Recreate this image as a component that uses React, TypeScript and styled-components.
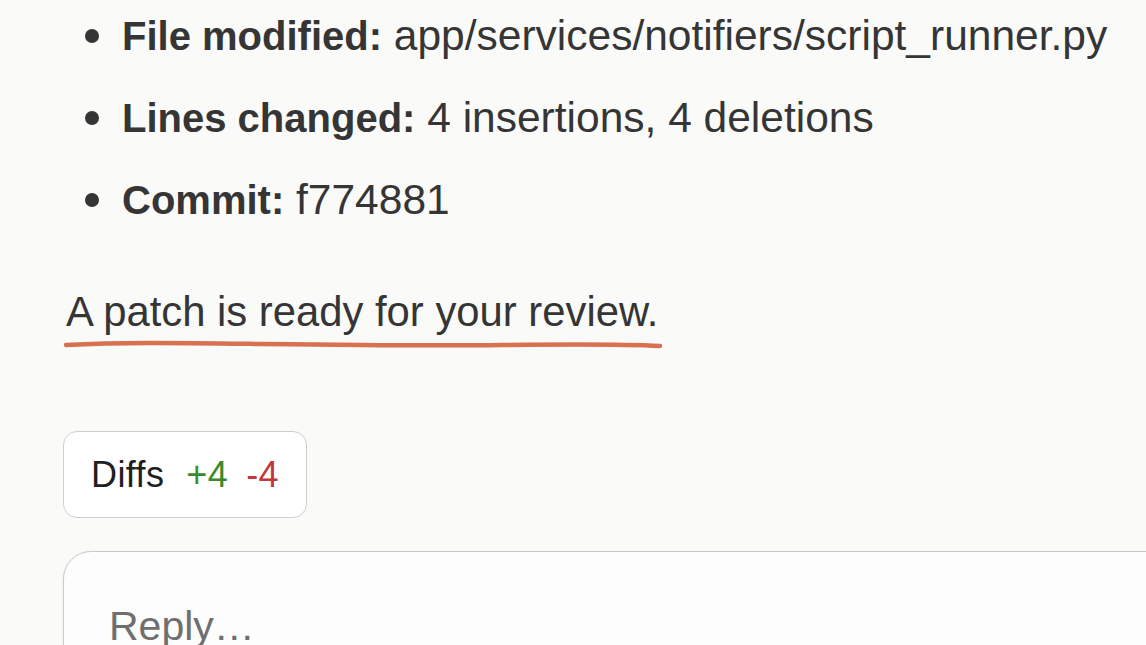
import styled, { createGlobalStyle } from "styled-components";

const GlobalStyle = createGlobalStyle`
  html, body {
    margin: 0;
    padding: 0;
    background: #fafaf9;
  }
  body {
    font-family: "Liberation Sans", Arial, sans-serif;
    color: #353535;
  }
`

const Page = styled.div`
  width: 1146px;
  height: 645px;
  overflow: hidden;
  padding: 12px 0 0 63px;
  box-sizing: border-box;
`

const List = styled.ul`
  list-style: none;
  margin: 0;
  padding: 0;
  display: flex;
  flex-direction: column;
  gap: 34px;
`

const Item = styled.li`
  position: relative;
  padding-left: 59px;
  font-size: 42.5px;
  line-height: 48px;
  white-space: nowrap;
  &::before {
    content: "";
    position: absolute;
    left: 22px;
    top: 17px;
    width: 14px;
    height: 14px;
    border-radius: 50%;
    background: #353535;
  }
`

const Label = styled.strong`
  font-weight: 700;
  font-size: 40px;
`

const Note = styled.p`
  margin: 64px 0 0 3px;
  font-size: 41.8px;
  line-height: 48px;
  color: #353535;
`

const Underline = styled.svg`
  display: block;
  margin-top: 4px;
`

const DiffButton = styled.button`
  display: flex;
  align-items: center;
  gap: 20px;
  margin-top: 81px;
  width: 244px;
  height: 87px;
  padding: 0 0 0 27px;
  box-sizing: border-box;
  background: #ffffff;
  border: 1.5px solid #cfcfcf;
  border-radius: 14px;
  font-family: "Liberation Sans", Arial, sans-serif;
  font-size: 36px;
  letter-spacing: 0.4px;
  color: #1f1f1f;
`

const Count = styled.span<{ tone: "add" | "del" }>`
  color: ${(p) => (p.tone === "add" ? "#3a8a2a" : "#c2393c")};
  margin-left: ${(p) => (p.tone === "add" ? "2px" : "-2px")};
`

const ReplyBox = styled.div`
  margin-top: 33px;
  width: 1200px;
  height: 140px;
  box-sizing: border-box;
  background: #fdfdfd;
  border: 1.5px solid #c9c9c9;
  border-radius: 28px;
  box-shadow: 0 1px 3px rgba(0, 0, 0, 0.06);
  padding: 50px 0 0 45px;
`

const ReplyInput = styled.div`
  font-size: 41px;
  line-height: 48px;
  color: #6f6f6f;
`

const items = [
  { label: "File modified:", value: "app/services/notifiers/script_runner.py" },
  { label: "Lines changed:", value: "4 insertions, 4 deletions" },
  { label: "Commit:", value: "f774881" },
]

export default function App() {
  return (
    <>
      <GlobalStyle />
      <Page>
        <List>
          {items.map((item) => (
            <Item key={item.label}>
              <Label>{item.label}</Label> {item.value}
            </Item>
          ))}
        </List>
        <Note>A patch is ready for your review.</Note>
        <Underline width="600" height="10" viewBox="0 0 600 10">
          <path
            d="M3 5 C 60 2, 120 3, 200 4 S 360 6, 440 5 S 560 4, 597 6"
            fill="none"
            stroke="#d8714f"
            strokeWidth="4.5"
            strokeLinecap="round"
          />
        </Underline>
        <DiffButton>
          Diffs
          <Count tone="add">+4</Count>
          <Count tone="del">-4</Count>
        </DiffButton>
        <ReplyBox>
          <ReplyInput>Reply…</ReplyInput>
        </ReplyBox>
      </Page>
    </>
  )
}
